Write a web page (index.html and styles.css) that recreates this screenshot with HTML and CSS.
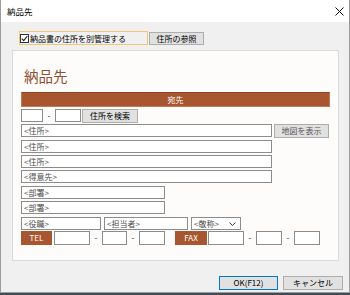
FILE: index.html
```html
<!DOCTYPE html>
<html lang="ja">
<head>
    <meta charset="UTF-8">
    <meta name="viewport" content="width=device-width, initial-scale=1.0">
    <title>納品先</title>
    <link rel="stylesheet" href="styles.css">
</head>
<body>
  <div class="window">
    <div class="titlebar">
      <span class="title">納品先</span>
      <svg class="close" width="9" height="9" viewBox="0 0 9 9">
        <path d="M0.5 0.5 L8.5 8.5 M8.5 0.5 L0.5 8.5" stroke="#111" stroke-width="1" fill="none"/>
      </svg>
    </div>

    <div class="toprow">
      <label class="check">
        <span class="checkbox">
          <svg width="7" height="7" viewBox="0 0 7 7"><path d="M0.8 3.6 L2.7 5.6 L6.3 1.2" stroke="#222" stroke-width="1.1" fill="none"/></svg>
        </span>
        納品書の住所を別管理する
      </label>
      <button class="btn ref">住所の参照</button>
    </div>

    <div class="panel">
      <h1>納品先</h1>
      <div class="bar">宛先</div>

      <div class="form">
        <div class="row">
          <input type="text" class="zip1">
          <span class="dash">-</span>
          <input type="text" class="zip2">
          <button class="btn search">住所を検索</button>
        </div>
        <div class="row">
          <input type="text" class="addr" placeholder="<住所>">
          <button class="btn map">地図を表示</button>
        </div>
        <div class="row"><input type="text" class="addr" placeholder="<住所>"></div>
        <div class="row"><input type="text" class="addr" placeholder="<住所>"></div>
        <div class="row"><input type="text" class="addr" placeholder="<得意先>"></div>
        <div class="row"><input type="text" class="dept" placeholder="<部署>"></div>
        <div class="row"><input type="text" class="dept" placeholder="<部署>"></div>
        <div class="row gap3">
          <input type="text" class="post" placeholder="<役職>">
          <input type="text" class="person" placeholder="<担当者>">
          <div class="select">
            <span>&lt;敬称&gt;</span>
            <svg width="7" height="4" viewBox="0 0 7 4"><path d="M0.5 0.5 L3.5 3.5 L6.5 0.5" stroke="#333" fill="none"/></svg>
          </div>
        </div>
        <div class="row phone">
          <span class="tag">TEL</span>
          <input type="text" class="ph1">
          <span class="dash">-</span>
          <input type="text" class="ph2">
          <span class="dash">-</span>
          <input type="text" class="ph2">
          <span class="tag fax">FAX</span>
          <input type="text" class="ph1">
          <span class="dash">-</span>
          <input type="text" class="ph2">
          <span class="dash">-</span>
          <input type="text" class="ph2">
        </div>
      </div>
    </div>

    <div class="footer">
      <button class="btn ok">OK(F12)</button>
      <button class="btn cancel">キャンセル</button>
    </div>
  </div>
</body>
</html>
```

FILE: styles.css
```css
body{
  margin:0;
  background:#3f4b58;
  font-family:"Noto Sans CJK JP", sans-serif;
  font-size:8px;
  color:#000;
}
.window{
  width:350px;
  height:293px;
  box-sizing:border-box;
  border:1px solid #9c9c9c;
  border-top:none;
  background:#f0f0f0;
  display:flex;
  flex-direction:column;
}
.titlebar{
  height:22px;
  background:#fff;
  display:flex;
  align-items:center;
  justify-content:space-between;
  padding:0 5px 0 6px;
}
.titlebar .title{
  font-size:8.5px;
}

.toprow{
  display:flex;
  align-items:center;
  gap:1px;
  margin:9px 0 0 18px;
  height:14px;
}
.check{
  display:flex;
  align-items:center;
  gap:1px;
  width:129px;
  height:14px;
  box-sizing:border-box;
  border:1px solid #f2c679;
  padding-left:0;
}
.checkbox{
  width:9px;
  height:9px;
  box-sizing:border-box;
  border:1px solid #333;
  background:#fff;
  display:flex;
  align-items:center;
  justify-content:center;
}

.btn{
  font-family:inherit;
  font-size:8px;
  color:#000;
  background:#e1e1e1;
  border:1px solid #adadad;
  padding:0;
  height:14px;
  line-height:12px;
  box-sizing:border-box;
}
.btn.ref{ width:55px; height:13px; }
.btn.search{ width:56px; margin-left:1px; }
.btn.map{ width:55px; margin-left:2px; color:#555; }

.panel{
  margin:5px 0 0 11px;
  width:327px;
  height:211px;
  box-sizing:border-box;
  border:1px solid #dadada;
  background:#fdfcfb;
  padding:0 8px;
}
.panel h1{
  margin:16px 0 8px 3px;
  font-size:14.5px;
  line-height:17px;
  font-weight:normal;
  color:#8e5233;
}
.bar{
  height:15px;
  box-sizing:border-box;
  background:#a8562f;
  border:1px solid #c07a55;
  border-top-color:#93441f;
  color:#fff;
  text-align:center;
  line-height:13px;
}

.form{
  display:grid;
  grid-template-rows:15px 16px 15px 15px 16px 15px 16px 14px 14px;
  margin-top:2px;
}
.row{
  display:flex;
  align-items:flex-start;
}
.row.gap3{ gap:3px; }

.form input, .select{
  height:13px;
  box-sizing:border-box;
  border:1px solid #8c8c8c;
  background:#fff;
  font-family:inherit;
  font-size:8px;
  padding:0 2px;
  margin:0;
  outline:none;
}
.form input::placeholder{
  color:#4a4a4a;
}
.dash{
  width:12px;
  text-align:center;
  line-height:13px;
}
.zip1{ width:22px; }
.zip2{ width:26px; }
.addr{ width:251px; }
.dept{ width:144px; }
.post{ width:80px; }
.person{ width:84px; }
.select{
  width:50px;
  display:flex;
  align-items:center;
  justify-content:space-between;
  padding:0 4px 0 2px;
  color:#4a4a4a;
}

.phone input{ height:14px; }
.tag{
  width:31px;
  height:14px;
  background:#a8562f;
  color:#fff;
  text-align:center;
  line-height:14px;
  margin-right:2px;
}
.tag.fax{
  width:32px;
  margin-left:10px;
  margin-right:1px;
}
.ph1{ width:36px; }
.ph2{ width:26px; }
.phone .ph2:nth-of-type(2){ width:25px; }

.footer{
  display:flex;
  justify-content:flex-end;
  gap:5px;
  margin:15px 6px 0 0;
}
.btn.ok{
  width:59px;
  border-color:#0078d7;
}
.btn.cancel{
  width:60px;
}
```
